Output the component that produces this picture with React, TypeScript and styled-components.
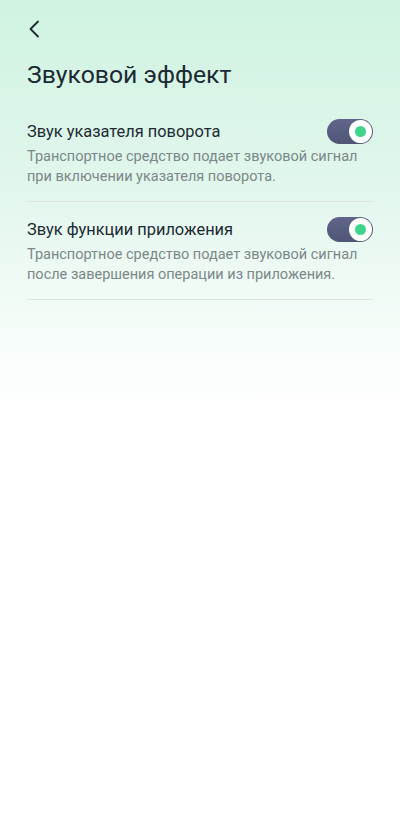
import React from "react";
import styled, { createGlobalStyle } from "styled-components";

const Global = createGlobalStyle`
  html, body { margin: 0; padding: 0; }
  body {
    font-family: Roboto, "Noto Sans", sans-serif;
    background: #ffffff;
  }
`;

const Page = styled.div`
  width: 400px;
  min-height: 814px;
  box-sizing: border-box;
  background: linear-gradient(180deg, #cff3e1 0px, #e3f7ed 200px, #f4fcf8 320px, #ffffff 410px, #ffffff 100%);
  padding: 0 27px;
  display: flex;
  flex-direction: column;
`;

const TopBar = styled.div`
  height: 58px;
  display: flex;
  align-items: center;
`;

const BackButton = styled.button`
  background: none;
  border: none;
  padding: 0;
  margin-left: 1px;
  width: 20px;
  height: 20px;
  display: flex;
  align-items: center;
  color: #1c2730;
`;

const Title = styled.h1`
  margin: 0;
  font-size: 24.8px;
  font-weight: 400;
  color: #1c2a33;
  line-height: 32px;
  padding-top: 1px;
  margin-bottom: 13px;
`;

const Item = styled.div`
  padding: 14px 0 14px;
  border-bottom: 1px solid #dde5e2;
`;

const ItemHead = styled.div`
  display: flex;
  align-items: center;
  justify-content: space-between;
  height: 26px;
`;

const ItemTitle = styled.div`
  font-size: 16.4px;
  color: #1c2a33;
`;

const Desc = styled.div`
  margin-top: 3px;
  font-size: 14.5px;
  line-height: 20px;
  color: #7b8788;
`;

const Track = styled.div<{ $on: boolean }>`
  width: 46px;
  height: 25px;
  border-radius: 13px;
  background: ${(p) => (p.$on ? "linear-gradient(180deg, #60658a, #4f5676)" : "#c8ccd4")};
  display: flex;
  align-items: center;
  justify-content: ${(p) => (p.$on ? "flex-end" : "flex-start")};
  padding: 0 1px;
  box-sizing: border-box;
  flex-shrink: 0;
`;

const Knob = styled.div`
  width: 23px;
  height: 23px;
  border-radius: 50%;
  background: #ffffff;
  display: flex;
  align-items: center;
  justify-content: center;
`;

const Dot = styled.div`
  width: 11px;
  height: 11px;
  border-radius: 50%;
  background: #3fd48a;
`;

const Toggle = ({ on }: { on: boolean }) => (
  <Track $on={on}>
    <Knob>{on && <Dot />}</Knob>
  </Track>
);

const items = [
  {
    title: "Звук указателя поворота",
    desc: ["Транспортное средство подает звуковой сигнал", "при включении указателя поворота."],
  },
  {
    title: "Звук функции приложения",
    desc: ["Транспортное средство подает звуковой сигнал", "после завершения операции из приложения."],
  },
];

export default function App() {
  return (
    <>
      <Global />
      <Page>
        <TopBar>
          <BackButton aria-label="Назад">
            <svg width="12" height="18" viewBox="0 0 12 18" fill="none">
              <path d="M10 1.5L2.5 9L10 16.5" stroke="currentColor" strokeWidth="1.8" strokeLinecap="round" strokeLinejoin="round" />
            </svg>
          </BackButton>
        </TopBar>
        <Title>Звуковой эффект</Title>
        {items.map((it) => (
          <Item key={it.title}>
            <ItemHead>
              <ItemTitle>{it.title}</ItemTitle>
              <Toggle on />
            </ItemHead>
            <Desc>
              {it.desc[0]}
              <br />
              {it.desc[1]}
            </Desc>
          </Item>
        ))}
      </Page>
    </>
  );
}
